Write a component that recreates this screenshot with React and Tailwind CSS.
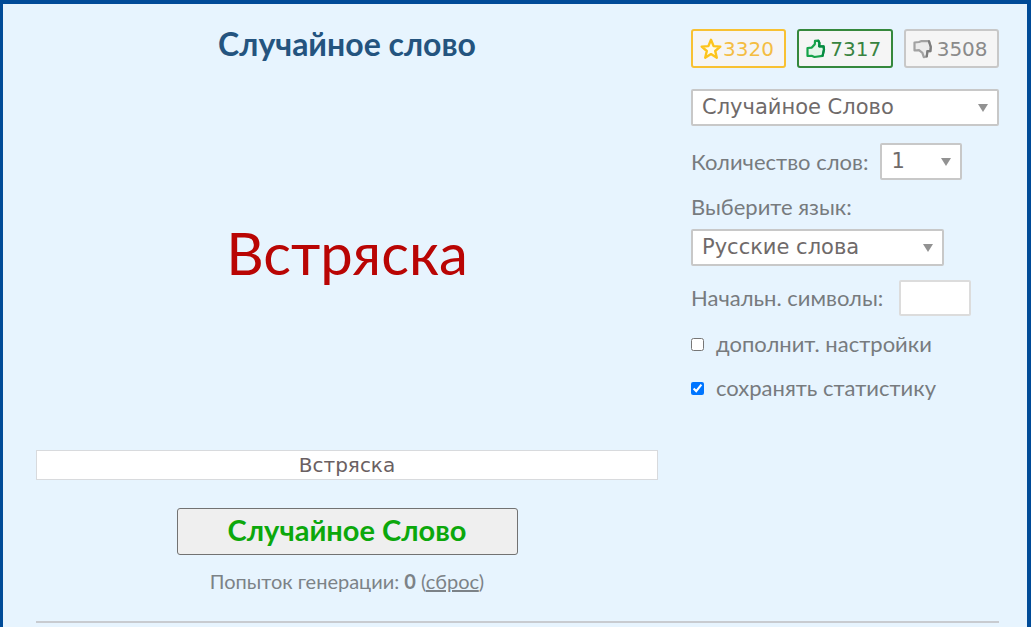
import React, { useState } from 'react';
import clsx from 'clsx';

const LABEL = 'font-[Lato,"Open_Sans",sans-serif] text-[22px] leading-7 text-[#777b7e]';

function StarIcon() {
  return (
    <svg viewBox="0 0 22 22" className="h-[22px] w-[22px] shrink-0" fill="#fffbe8" stroke="#fcc41c" strokeWidth="2.4" strokeLinejoin="round" aria-hidden="true">
      <path d="M11 1.8 13.6 8.1 20.3 8.6 15.2 13 16.8 19.7 11 16.1 5.2 19.7 6.8 13 1.7 8.6 8.4 8.1Z" />
    </svg>
  );
}

function ThumbIcon({ down = false }) {
  return (
    <svg
      viewBox="0 0 20 20"
      className={clsx('h-5 w-5 shrink-0', down ? 'text-[#a2a2a2]' : 'text-[#16a34a]')}
      fill={down ? '#ececec' : '#e4f6ea'}
      stroke="currentColor"
      strokeWidth="2.2"
      strokeLinejoin="round"
      strokeLinecap="round"
      aria-hidden="true">
      {down ? (
        <>
          <path d="M1.500 3.500 6 3 8 2.200H16L17.800 8 17.400 12.200H14.400L13.800 17.400 10.800 18.200 9.400 13.800 6 11.200 1.500 11.500Z" />
          <path d="M16 2.400 17.800 8 17.400 12.200H14.400L13.800 17.400" stroke="#7d7d7d" fill="none" />
        </>
      ) : (
        <>
          <path d="M1.500 9 5.800 8.600 8.800 5.200 9 1.800 12.400 1.600 13.400 4 13.200 7.400H17.600L18 10.500 16.600 16.800 8.500 18 5.600 16.800 1.500 17Z" />
          <path d="M12.400 1.800 13.400 4 13.200 7.400H17.600L18 10.500 16.600 16.800" stroke="#078a42" fill="none" />
        </>
      )}
    </svg>
  );
}

function VoteButton({ className, label, count, children }) {
  return (
    <button
      type="button"
      aria-label={label}
      className={clsx('flex h-[39px] flex-1 items-center rounded-[3px] border-2 bg-[#f5f5f5] pl-[7px] font-["DejaVu_Sans",sans-serif] text-xl', className)}>
      {children}
      <span>{count}</span>
    </button>
  );
}

function Select({ id, label, className, options }) {
  return (
    <div className={clsx('grid items-center', className)}>
      <select
        id={id}
        aria-label={label}
        className='col-start-1 row-start-1 h-[37px] w-full appearance-none rounded-[2px] border-2 border-[#c8c8c8] bg-white pt-px pr-7 pl-[9px] font-["DejaVu_Sans",sans-serif] text-[21px] text-[#6f6a6a]'>
        {options.map((option) => (
          <option key={option}>{option}</option>
        ))}
      </select>
      <svg viewBox="0 0 10 8" className="pointer-events-none col-start-1 row-start-1 mr-[11px] h-2 w-[10px] justify-self-end" fill="#929292" aria-hidden="true">
        <path d="M0 0H10L5 8Z" />
      </svg>
    </div>
  );
}

export default function App() {
  const [word, setWord] = useState('Встряска');
  const [prefix, setPrefix] = useState('');
  const [extra, setExtra] = useState(false);
  const [stats, setStats] = useState(true);

  return (
    <div className="min-h-screen border-t-4 border-r-4 border-l-[3px] border-[#004b98] bg-[#e7f4fe] pr-7 pl-[33px]">
      <div className="flex gap-[33px] pt-[25px]">
        {/* Generator */}
        <main className='flex min-w-0 flex-1 flex-col items-center font-[Lato,"Open_Sans",sans-serif]'>
          <h1 className="text-[32px] leading-[30px] font-bold text-[#24547f]">Случайное слово</h1>
          <div className="flex h-[391px] items-center pb-1 text-[58px] text-[#b90504]">{word}</div>
          <input
            type="text"
            aria-label="Результат"
            value={word}
            onChange={(e) => setWord(e.target.value)}
            className='h-[30px] w-full border border-[#d8dadd] bg-white text-center font-["DejaVu_Sans",sans-serif] text-xl text-[#6a6062]'
          />
          <button
            type="button"
            className="mt-7 h-[47px] w-[341px] rounded-[3px] border border-[#727272] bg-[#efefef] pb-1 text-[29px] leading-10 font-bold text-[#0ca80c]">
            Случайное Слово
          </button>
          <p className="mt-3 text-xl leading-7 text-[#7c8287]">
            Попыток генерации: <b>0</b> (<a href="#reset" className="underline">сброс</a>)
          </p>
        </main>

        {/* Settings */}
        <aside className="w-[308px] shrink-0">
          <div className="flex gap-[11px]">
            <VoteButton label="В избранное 3320" count={3320} className="gap-px border-[#f8c132] text-[#f4bd42]">
              <StarIcon />
            </VoteButton>
            <VoteButton label="Нравится 7317" count={7317} className="gap-1 border-[#35883c] text-[#378340]">
              <ThumbIcon />
            </VoteButton>
            <VoteButton label="Не нравится 3508" count={3508} className="gap-1 border-[#c8c8c8] text-[#8a8a8a]">
              <ThumbIcon down />
            </VoteButton>
          </div>

          <Select label="Генератор" className="mt-[21px] w-full" options={['Случайное Слово', 'Случайное Число']} />

          <div className="mt-[17px] flex items-center gap-3">
            <label htmlFor="count" className={LABEL}>Количество слов:</label>
            <Select id="count" className="w-[82px]" options={['1', '2', '3', '5', '10']} />
          </div>

          <label htmlFor="lang" className={clsx(LABEL, 'mt-[13px] block')}>Выберите язык:</label>
          <Select id="lang" className="mt-2 w-[253px]" options={['Русские слова', 'Английские слова']} />

          <div className="mt-[14px] flex items-center gap-4">
            <label htmlFor="prefix" className={LABEL}>Начальн. символы:</label>
            <input
              id="prefix"
              type="text"
              value={prefix}
              onChange={(e) => setPrefix(e.target.value)}
              className="h-9 w-[72px] rounded-[2px] border-2 border-[#dcdcdc] bg-white px-2 text-xl"
            />
          </div>

          <label className={clsx(LABEL, 'mt-[14px] flex items-center gap-3')}>
            <input type="checkbox" checked={extra} onChange={(e) => setExtra(e.target.checked)} className="h-[13px] w-[13px]" />
            дополнит. настройки
          </label>
          <label className={clsx(LABEL, 'mt-4 flex items-center gap-3')}>
            <input type="checkbox" checked={stats} onChange={(e) => setStats(e.target.checked)} className="h-[13px] w-[13px]" />
            сохранять статистику
          </label>
        </aside>
      </div>
      <hr className="mt-[26px] border-t-2 border-[#c8cbd0]" />
    </div>
  );
}
